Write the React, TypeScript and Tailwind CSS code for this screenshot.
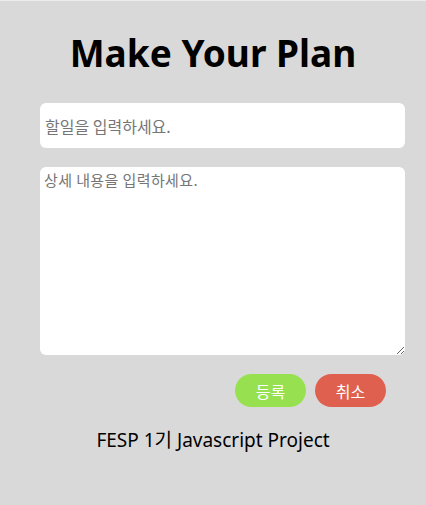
export default function App() {
  return (
    <div className="min-h-[505px] w-full border-t border-[#ececec] bg-[#d9d9d9] font-['Noto_Sans','Noto_Sans_CJK_KR',sans-serif]">
      <h1 className="mt-[25px] text-center text-[37px] font-bold leading-[54px] text-black">
        Make Your Plan
      </h1>

      <form className="ml-[40px] mt-[23px] flex w-[365px] flex-col" onSubmit={e => e.preventDefault()}>
        <input
          type="text"
          placeholder="할일을 입력하세요."
          className="h-[45px] w-full rounded-[6px] bg-white px-[5px] font-['Noto_Sans_CJK_KR',sans-serif] text-[16px] text-black outline-none placeholder:text-[#767676]"
        />
        <textarea
          placeholder="상세 내용을 입력하세요."
          className="mt-[19px] h-[188px] w-full rounded-[6px] bg-white px-[4px] py-[1px] font-['Noto_Sans_CJK_KR',monospace] text-[15px] leading-[24px] tracking-[0.4px] text-black outline-none placeholder:text-[#767676]"
        />
        <div className="mt-[19px] flex justify-end gap-[9px] pr-[19px]">
          <button
            type="submit"
            className="h-[33px] w-[71px] rounded-full bg-[#97e150] font-['Noto_Sans_CJK_KR',sans-serif] text-[16px] text-white"
          >
            등록
          </button>
          <button
            type="button"
            className="h-[33px] w-[71px] rounded-full bg-[#e0604f] font-['Noto_Sans_CJK_KR',sans-serif] text-[16px] text-white"
          >
            취소
          </button>
        </div>
      </form>

      <p className="mt-[20px] text-center text-[19px] leading-[26px] text-black">
        FESP 1기 Javascript Project
      </p>
    </div>
  )
}
